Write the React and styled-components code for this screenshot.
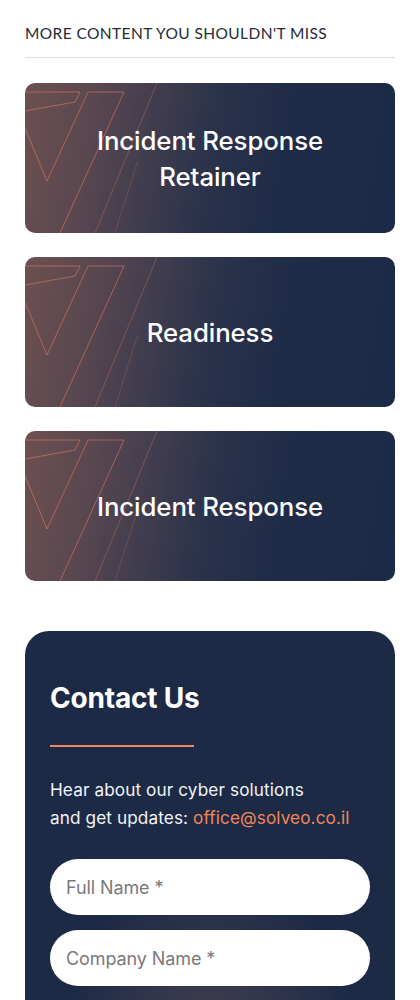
import React from 'react';
import styled, { createGlobalStyle } from 'styled-components';

const GlobalStyle = createGlobalStyle`
  * { box-sizing: border-box; }
  body {
    margin: 0;
    background: #ffffff;
    font-family: Inter, "Noto Sans", sans-serif;
  }
`;

const Page = styled.div`
  width: 420px;
  padding: 24px 25px 0;
  display: flex;
  flex-direction: column;
`;

const SectionHeading = styled.h4`
  margin: 0;
  padding-bottom: 15px;
  border-bottom: 1px solid #dddddd;
  font-family: Lato, "Noto Sans", sans-serif;
  font-size: 15.5px;
  font-weight: 400;
  letter-spacing: 0.4px;
  color: #262b36;
`;

const CardList = styled.div`
  display: flex;
  flex-direction: column;
  gap: 24px;
  margin-top: 25px;
`;

const Card = styled.a`
  position: relative;
  display: flex;
  align-items: center;
  justify-content: center;
  height: 150px;
  border-radius: 10px;
  overflow: hidden;
  text-decoration: none;
  background: linear-gradient(100deg, #6c5051 0%, #5a4750 18%, #413d4e 34%, #2b324b 50%, #1f2c48 68%, #1b2a46 100%);
`;

const CardLines = styled.svg`
  position: absolute;
  left: 0;
  top: 0;
  width: 170px;
  height: 150px;
`;

const CardTitle = styled.span`
  position: relative;
  padding: 2px 20px 0;
  text-align: center;
  font-family: Inter, "Noto Sans", sans-serif;
  font-size: 25.8px;
  font-weight: 500;
  line-height: 36px;
  letter-spacing: -0.1px;
  color: #ffffff;
`;

const Contact = styled.section`
  margin-top: 50px;
  padding: 47px 25px 40px;
  border-radius: 24px;
  background:
    radial-gradient(ellipse 150px 220px at 50% 95%, rgba(110, 85, 92, 0.55), rgba(110, 85, 92, 0) 100%),
    #1c2a46;
  color: #ffffff;
`;

const ContactTitle = styled.h2`
  margin: 0;
  font-family: Inter, "Noto Sans", sans-serif;
  font-size: 28px;
  font-weight: 700;
  letter-spacing: -0.2px;
  line-height: 40px;
`;

const Accent = styled.div`
  width: 144px;
  height: 2px;
  margin: 27px 0 29px;
  background: #f0875a;
`;

const Lead = styled.p`
  margin: 0 0 27px;
  font-family: Inter, "Noto Sans", sans-serif;
  font-size: 17.2px;
  line-height: 28px;
  letter-spacing: 0.1px;
  color: #f2f3f6;
`;

const Mail = styled.a`
  color: #f0875a;
  text-decoration: none;
`;

const Form = styled.form`
  display: flex;
  flex-direction: column;
  gap: 15px;
`;

const Field = styled.input`
  width: 100%;
  height: 56px;
  padding: 0 16px;
  border: none;
  border-radius: 28px;
  background: #ffffff;
  font-family: Inter, "Noto Sans", sans-serif;
  font-size: 18px;
  letter-spacing: -0.1px;
  color: #333;
  outline: none;

  &::placeholder {
    color: #7a7a7a;
  }
`;

const Lines = () => (
  <CardLines viewBox="0 0 170 150" fill="none" stroke="#e07a5e" strokeWidth="0.8" strokeOpacity="0.75">
    <polyline points="0,28 50,19 55,9 0,9" />
    <polyline points="0,45 22,98 63,9 99,9 35,150" />
    <line x1="132" y1="0" x2="70" y2="150" strokeOpacity="0.45" />
    <line x1="112" y1="80" x2="90" y2="150" strokeOpacity="0.3" />
  </CardLines>
);

const cards = [
  { title: <>Incident Response<br />Retainer</> },
  { title: 'Readiness' },
  { title: 'Incident Response' },
];

export default function App() {
  return (
    <>
      <GlobalStyle />
      <Page>
        <SectionHeading>MORE CONTENT YOU SHOULDN'T MISS</SectionHeading>
        <CardList>
          {cards.map((c, i) => (
            <Card key={i} href="#">
              <Lines />
              <CardTitle>{c.title}</CardTitle>
            </Card>
          ))}
        </CardList>
        <Contact>
          <ContactTitle>Contact Us</ContactTitle>
          <Accent />
          <Lead>
            Hear about our cyber solutions<br />
            and get updates: <Mail href="#">office@solveo.co.il</Mail>
          </Lead>
          <Form>
            <Field placeholder="Full Name *" />
            <Field placeholder="Company Name *" />
            <Field placeholder="Email *" />
          </Form>
        </Contact>
      </Page>
    </>
  );
}
